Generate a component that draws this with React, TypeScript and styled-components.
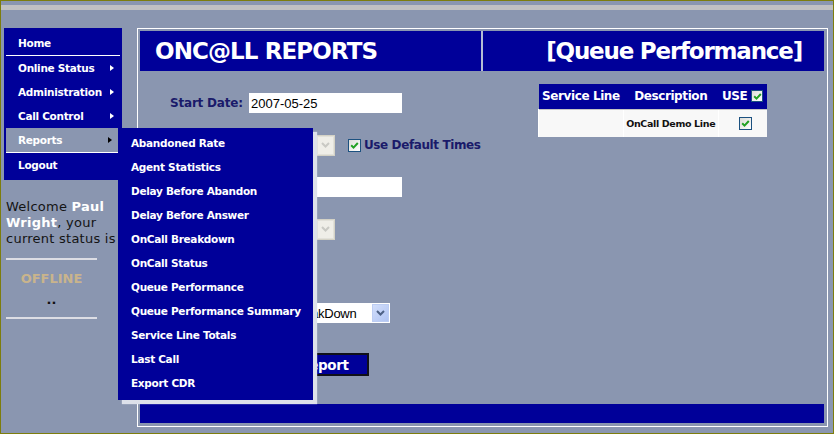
import React from "react";
import styled, { createGlobalStyle } from "styled-components";

const NAVY = "#000099";
const SLATE = "#8a96b0";
const LABEL = "#1a1a6a";

const GlobalStyle = createGlobalStyle`
  html, body { margin: 0; padding: 0; background: ${SLATE}; }
  body { font-family: "DejaVu Sans", Verdana, sans-serif; }
  * { box-sizing: border-box; }
`;

const Page = styled.div`
  width: 834px;
  height: 434px;
  border: 1px solid #7d7d0c;
  background: ${SLATE};
  display: flex;
  flex-direction: column;
  overflow: hidden;
`;

const TopStrip = styled.div`
  height: 5px;
  margin-top: 4px;
  background: #c0c0c2;
`;

const Body = styled.div`
  display: flex;
  padding-top: 18px;
`;

const Sidebar = styled.aside`
  width: 136px;
  padding-left: 3px;
  position: relative;
  z-index: 5;
`;

const Nav = styled.nav`
  width: 118px;
  background: ${NAVY};
  padding: 3px 2px;
`;

const NavItem = styled.div<{ $active?: boolean; $divider?: boolean }>`
  position: relative;
  height: ${(p) => (p.$divider ? 25 : 24)}px;
  display: flex;
  align-items: center;
  justify-content: space-between;
  padding: 0 6px 0 12px;
  margin-right: ${(p) => (p.$active ? 2 : 0)}px;
  background: ${(p) => (p.$active ? SLATE : "transparent")};
  border-bottom: ${(p) => (p.$divider ? "1px solid #ffffff" : "none")};
  color: #ffffff;
  font-size: 10.5px;
  font-weight: bold;
  letter-spacing: -0.3px;
  white-space: nowrap;
`;

const Arrow = styled.span<{ $dark?: boolean }>`
  width: 0;
  height: 0;
  border-top: 3.5px solid transparent;
  border-bottom: 3.5px solid transparent;
  border-left: 4px solid ${(p) => (p.$dark ? "#000000" : "#ffffff")};
`;

const Flyout = styled.div`
  position: absolute;
  left: 100%;
  top: 0;
  width: 195px;
  padding: 3px 0 5px;
  background: ${NAVY};
  box-shadow: 4px 4px 1px #dde1ea;
  z-index: 10;
`;

const FlyItem = styled.div`
  height: 24px;
  display: flex;
  align-items: center;
  padding-left: 13px;
  color: #ffffff;
  font-size: 10.5px;
  font-weight: bold;
  letter-spacing: -0.3px;
  white-space: nowrap;
`;

const Welcome = styled.p`
  margin: 19px 0 0 2px;
  font-size: 13px;
  line-height: 16px;
  letter-spacing: 0.25px;
  color: #141414;
`;

const Name = styled.b`
  color: #ffffff;
`;

const Status = styled.div`
  width: 91px;
  margin: 11px 0 0 2px;
  border-top: 2px solid #dcdde4;
  border-bottom: 2px solid #dcdde4;
  display: flex;
  flex-direction: column;
  align-items: center;
  padding: 11px 0 9px;
`;

const Offline = styled.span`
  font-size: 13px;
  line-height: 16px;
  font-weight: bold;
  color: #c9b48c;
`;

const Dots = styled.span`
  margin-top: 5px;
  font-size: 13px;
  line-height: 16px;
  font-weight: bold;
  color: #111111;
`;

const Frame = styled.main`
  width: 691px;
  height: 399px;
  border: 1px solid #ffffff;
  padding: 2px 3px 3px 2px;
  display: flex;
  flex-direction: column;
`;

const Header = styled.header`
  display: flex;
  height: 40px;
  background: ${NAVY};
`;

const HeaderCell = styled.div<{ $right?: boolean }>`
  display: flex;
  align-items: center;
  ${(p) =>
    p.$right
      ? "flex: 1; justify-content: flex-end; padding-right: 22px; letter-spacing: -1.2px;"
      : "width: 343px; padding-left: 15px; border-right: 2px solid #b4bcd4; letter-spacing: -0.9px;"}
  color: #ffffff;
  font-size: 23px;
  font-weight: bold;
  white-space: nowrap;
`;

const Content = styled.section`
  flex: 1;
  display: flex;
`;

const Form = styled.div`
  flex: 0 0 398px;
  padding: 11px 0 0 30px;
`;

const Row = styled.div`
  display: flex;
  align-items: center;
  height: 42px;
  padding-left: 79px;
`;

const LabelRow = styled.div`
  display: flex;
  align-items: center;
  height: 42px;
`;

const ButtonRow = styled.div`
  display: flex;
  padding: 19px 0 0 79px;
`;

const Label = styled.label`
  width: 79px;
  font-size: 12px;
  font-weight: bold;
  letter-spacing: -0.2px;
  color: ${LABEL};
  white-space: nowrap;
`;

const TextInput = styled.input`
  width: 153px;
  height: 20px;
  border: none;
  padding: 0 2px;
  background: #ffffff;
  font-family: "Liberation Sans", Arial, sans-serif;
  font-size: 13px;
  color: #000000;
  outline: none;
`;

const SelectBox = styled.div<{ $width: number; $disabled?: boolean }>`
  width: ${(p) => p.$width}px;
  height: ${(p) => (p.$disabled ? 21 : 20)}px;
  display: flex;
  align-items: center;
  border: 1px solid ${(p) => (p.$disabled ? "#d4d2c6" : "#ffffff")};
  background: ${(p) => (p.$disabled ? "#ecebe4" : "#ffffff")};
  font-family: "Liberation Sans", Arial, sans-serif;
  font-size: 13px;
  color: #000000;
`;

const SelectText = styled.span`
  flex: 1;
  padding-left: 1px;
  letter-spacing: -0.3px;
  white-space: nowrap;
  overflow: hidden;
`;

const SelectButton = styled.span<{ $disabled?: boolean }>`
  width: 17px;
  height: 100%;
  display: flex;
  align-items: center;
  justify-content: center;
  border: 1px solid ${(p) => (p.$disabled ? "#e2e1da" : "#bccdf3")};
  background: ${(p) =>
    p.$disabled ? "#efeee8" : "linear-gradient(135deg, #d2defb, #b0c4f3)"};
`;

const CheckBox = styled.span<{ $small?: boolean; $gap?: number }>`
  display: inline-flex;
  align-items: center;
  justify-content: center;
  width: ${(p) => (p.$small ? 12 : 13)}px;
  height: ${(p) => (p.$small ? 12 : 13)}px;
  margin-left: ${(p) => p.$gap ?? 0}px;
  border: 1px solid #1c5180;
  background: linear-gradient(135deg, #dcdcd6, #ffffff);
  flex: none;
  vertical-align: middle;
`;

const CheckLabel = styled.span`
  margin-left: 3px;
  font-size: 12px;
  font-weight: bold;
  letter-spacing: -0.4px;
  color: ${LABEL};
  white-space: nowrap;
`;

const Button = styled.button`
  width: 120px;
  height: 23px;
  border: 2px solid #101018;
  background: ${NAVY};
  color: #ffffff;
  font-family: "DejaVu Sans", Verdana, sans-serif;
  font-size: 13.5px;
  font-weight: bold;
  letter-spacing: -0.4px;
  padding: 0;
`;

const Table = styled.table`
  margin-top: 13px;
  width: 229px;
  border-collapse: collapse;
  align-self: flex-start;
  font-family: "DejaVu Sans", Verdana, sans-serif;
`;

const Th = styled.th<{ $w: number }>`
  width: ${(p) => p.$w}px;
  height: 25px;
  padding: 0;
  background: ${NAVY};
  color: #ffffff;
  font-size: 12px;
  font-weight: bold;
  letter-spacing: -0.4px;
  white-space: nowrap;
  text-align: center;
`;

const UseHead = styled.span`
  display: inline-flex;
  align-items: center;
  gap: 4px;
`;

const Td = styled.td`
  height: 28px;
  padding: 0;
  background: #f8f8f8;
  border-top: 1px solid #c4c4c4;
  border-left: 1px solid #ffffff;
  font-size: 9.5px;
  font-weight: bold;
  letter-spacing: -0.35px;
  color: #111111;
  text-align: center;
  white-space: nowrap;
`;

const BottomBar = styled.footer`
  height: 19px;
  background: ${NAVY};
`;

const Tick = () => (
  <svg width="9" height="9" viewBox="0 0 9 9">
    <path d="M1.2 4.3 L3.5 6.6 L7.8 2" fill="none" stroke="#21a121" strokeWidth="2" />
  </svg>
);

const Chevron = ({ color }: { color: string }) => (
  <svg width="9" height="6" viewBox="0 0 9 6">
    <path d="M1 1 L4.5 4.5 L8 1" fill="none" stroke={color} strokeWidth="2" />
  </svg>
);

const reports = [
  "Abandoned Rate",
  "Agent Statistics",
  "Delay Before Abandon",
  "Delay Before Answer",
  "OnCall Breakdown",
  "OnCall Status",
  "Queue Performance",
  "Queue Performance Summary",
  "Service Line Totals",
  "Last Call",
  "Export CDR",
];

const DisabledSelect = () => (
  <SelectBox $width={86} $disabled>
    <SelectText />
    <SelectButton $disabled>
      <Chevron color="#c9c9c4" />
    </SelectButton>
  </SelectBox>
);

export default function App() {
  return (
    <>
      <GlobalStyle />
      <Page>
        <TopStrip />
        <Body>
          <Sidebar>
            <Nav>
              <NavItem $divider>Home</NavItem>
              <NavItem>
                Online Status <Arrow />
              </NavItem>
              <NavItem>
                Administration <Arrow />
              </NavItem>
              <NavItem>
                Call Control <Arrow />
              </NavItem>
              <NavItem $active $divider>
                Reports <Arrow $dark />
                <Flyout>
                  {reports.map((r) => (
                    <FlyItem key={r}>{r}</FlyItem>
                  ))}
                </Flyout>
              </NavItem>
              <NavItem>Logout</NavItem>
            </Nav>
            <Welcome>
              Welcome <Name>Paul</Name> <Name>Wright</Name>, your current status is
            </Welcome>
            <Status>
              <Offline>OFFLINE</Offline>
              <Dots>..</Dots>
            </Status>
          </Sidebar>
          <Frame>
            <Header>
              <HeaderCell>ONC@LL REPORTS</HeaderCell>
              <HeaderCell $right>[Queue Performance]</HeaderCell>
            </Header>
            <Content>
              <Form>
                <LabelRow>
                  <Label>Start Date:</Label>
                  <TextInput readOnly value="2007-05-25" />
                </LabelRow>
                <Row>
                  <DisabledSelect />
                  <CheckBox $gap={13}>
                    <Tick />
                  </CheckBox>
                  <CheckLabel>Use Default Times</CheckLabel>
                </Row>
                <Row>
                  <TextInput readOnly value="" />
                </Row>
                <Row>
                  <DisabledSelect />
                </Row>
                <Row />
                <Row>
                  <SelectBox $width={141}>
                    <SelectText>Queue BreakDown</SelectText>
                    <SelectButton>
                      <Chevron color="#4d6185" />
                    </SelectButton>
                  </SelectBox>
                </Row>
                <ButtonRow>
                  <Button>Get Report</Button>
                </ButtonRow>
              </Form>
              <Table>
                <thead>
                  <tr>
                    <Th $w={85}>Service Line</Th>
                    <Th $w={95}>Description</Th>
                    <Th $w={49}>
                      <UseHead>
                        USE
                        <CheckBox $small>
                          <Tick />
                        </CheckBox>
                      </UseHead>
                    </Th>
                  </tr>
                </thead>
                <tbody>
                  <tr>
                    <Td />
                    <Td>OnCall Demo Line</Td>
                    <Td>
                      <CheckBox $gap={6}>
                        <Tick />
                      </CheckBox>
                    </Td>
                  </tr>
                </tbody>
              </Table>
            </Content>
            <BottomBar />
          </Frame>
        </Body>
      </Page>
    </>
  );
}
